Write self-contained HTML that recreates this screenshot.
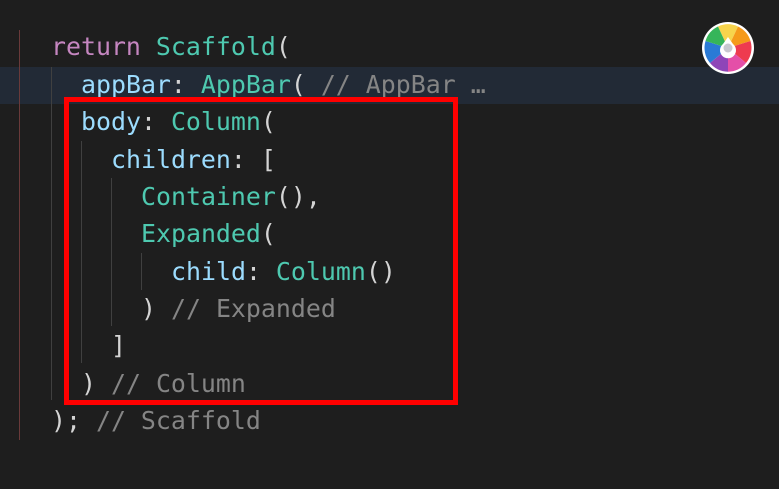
<!DOCTYPE html>
<html><head><style>
body{margin:0;width:779px;height:489px;background:#1e1e1e;overflow:hidden;position:relative;font-family:"DejaVu Sans Mono","Liberation Mono",monospace;}
.l{position:absolute;left:0;height:37.4px;line-height:37.4px;font-size:24.9px;white-space:pre;color:#d4d4d4;}
.k{color:#c586c0}.c{color:#4ec9b0}.p{color:#9cdcfe}.m{color:#858585}
.g{position:absolute;width:1px;background:#404040}
</style></head><body>
<div style="position:absolute;left:0;top:67px;width:779px;height:37px;background:#222a36"></div>
<div class="g" style="left:19px;top:30px;height:410px;background:#6a3a3a"></div>
<div class="g" style="left:51px;top:67px;height:333px"></div>
<div class="g" style="left:81px;top:141px;height:222px"></div>
<div class="g" style="left:111px;top:178px;height:148px"></div>
<div class="g" style="left:141px;top:253px;height:37px"></div>
<div class="l" style="top:28px;left:51px"><span class="k">return</span> <span class="c">Scaffold</span>(</div>
<div class="l" style="top:66px;left:81px"><span class="p">appBar</span>: <span class="c">AppBar</span>( <span class="m">// AppBar</span> <span class="m">…</span></div>
<div class="l" style="top:103px;left:81px"><span class="p">body</span>: <span class="c">Column</span>(</div>
<div class="l" style="top:141px;left:111px"><span class="p">children</span>: [</div>
<div class="l" style="top:178px;left:141px"><span class="c">Container</span>(),</div>
<div class="l" style="top:215px;left:141px"><span class="c">Expanded</span>(</div>
<div class="l" style="top:253px;left:171px"><span class="p">child</span>: <span class="c">Column</span>()</div>
<div class="l" style="top:290px;left:141px">) <span class="m">// Expanded</span></div>
<div class="l" style="top:327px;left:111px">]</div>
<div class="l" style="top:365px;left:81px">) <span class="m">// Column</span></div>
<div class="l" style="top:402px;left:51px">); <span class="m">// Scaffold</span></div>
<div style="position:absolute;left:64px;top:97px;width:384px;height:298px;border:5px solid #ff0000"></div>
<svg style="position:absolute;left:701px;top:21px" width="54" height="54" viewBox="-27 -27 54 54">
<circle r="26" fill="#fff"/>
<g>
<path d="M0 0 L-10 -21.5 A23.7 23.7 0 0 1 10 -21.5Z" fill="#f7d44c"/>
<path d="M0 0 L10 -21.5 A23.7 23.7 0 0 1 22.5 -7Z" fill="#f59a1a"/>
<path d="M0 0 L22.5 -7 A23.7 23.7 0 0 1 18 15Z" fill="#ee3b4f"/>
<path d="M0 0 L18 15 A23.7 23.7 0 0 1 0 23.7Z" fill="#e44fa8"/>
<path d="M0 0 L0 23.7 A23.7 23.7 0 0 1 -18 15Z" fill="#8e45b8"/>
<path d="M0 0 L-18 15 A23.7 23.7 0 0 1 -22.5 -7Z" fill="#2a7ad6"/>
<path d="M0 0 L-22.5 -7 A23.7 23.7 0 0 1 -10 -21.5Z" fill="#36b55a"/>
</g>
<path d="M0 -11 L5 -4 A8 8 0 1 1 -5 -4Z" fill="#fff"/>
<circle r="4.5" fill="#c8c8d0"/>
</svg>
</body></html>
